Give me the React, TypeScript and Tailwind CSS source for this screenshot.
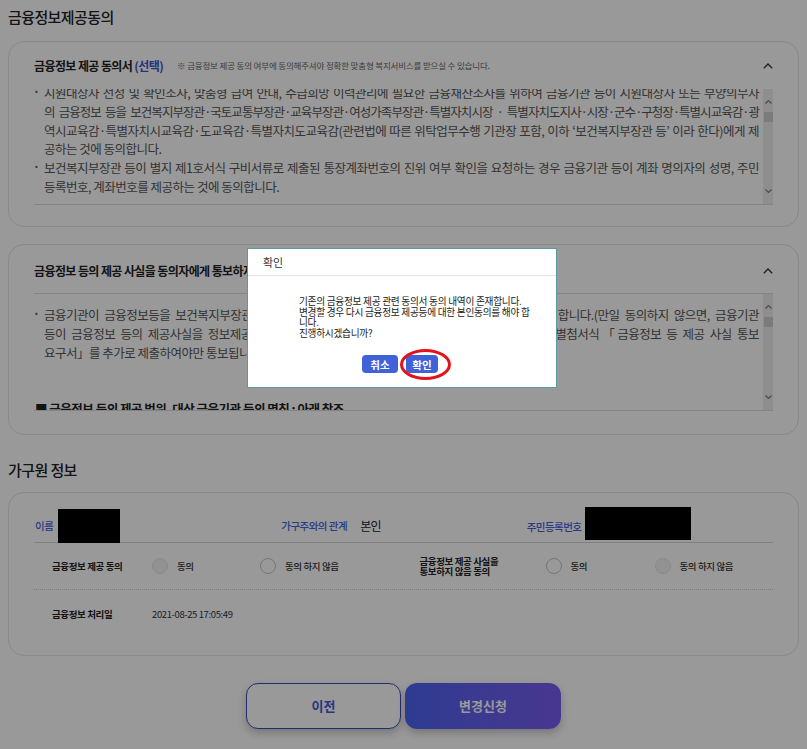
import React from 'react';

const FONT = "font-['Noto_Sans_CJK_KR','Noto_Sans',sans-serif]";

function ChevronUp() {
  return (
    <svg width="10" height="6" viewBox="0 0 10 6" className="shrink-0">
      <polyline points="0.8,5.3 5,1 9.2,5.3" fill="none" stroke="#333" strokeWidth="1.3" />
    </svg>
  );
}

function ScrollRail() {
  return (
    <div className="w-[10px] shrink-0 bg-[#ededed] flex flex-col">
      <div className="h-[15px] flex items-end justify-center">
        <svg width="7" height="4" viewBox="0 0 7 4">
          <polyline points="0.5,3.5 3.5,0.6 6.5,3.5" fill="none" stroke="#777" strokeWidth="1.1" />
        </svg>
      </div>
      <div className="mt-[8px] mx-auto h-[10px] w-[9px] bg-[#cdcdcd]" />
      <div className="flex-1" />
      <div className="h-[15px] flex items-start justify-center">
        <svg width="7" height="4" viewBox="0 0 7 4">
          <polyline points="0.5,0.5 3.5,3.4 6.5,0.5" fill="none" stroke="#777" strokeWidth="1.1" />
        </svg>
      </div>
    </div>
  );
}

// lines: every line but the last is stretched to the full width
function Bullet({ lines, tight }: { lines: string[]; tight?: number }) {
  return (
    <div className="flex">
      <span className="w-[9px] shrink-0 text-[8px] leading-[14px] text-[#555]">•</span>
      <div className="flex-1 min-w-0">
        {lines.map((l, i) => {
          let cls = i < lines.length - 1 ? 'block whitespace-nowrap [text-align-last:justify] text-justify' : 'block whitespace-nowrap';
          if (i === tight) cls += ' tracking-[-0.075em]';
          return (
            <span key={i} className={cls}>
              {l}
            </span>
          );
        })}
      </div>
    </div>
  );
}

function Radio({ disabled, label }: { disabled?: boolean; label: string }) {
  return (
    <div className="flex items-center">
      <span
        className={
          disabled
            ? 'w-[16px] h-[16px] rounded-full border border-[#e6e6e6] bg-[#f4f4f4]'
            : 'w-[16px] h-[16px] rounded-full border border-[#c4c4c4] bg-white'
        }
      />
      <span className="ml-[9px] text-[9.5px] tracking-[-0.04em] font-medium text-[#333]">{label}</span>
    </div>
  );
}

export default function App() {
  return (
    <div className={`${FONT} relative min-h-screen bg-white px-[8px] pb-[20px] text-[#333]`}>
      <h2 className="pt-[6px] pb-[14px] text-[15px] leading-[21px] tracking-[-0.04em] font-medium text-[#222]">금융정보제공동의</h2>

      {/* 금융정보 제공 동의서 */}
      <div className="rounded-2xl border border-[#e4e4e4] px-[25px] pb-[21px]">
        <div className="h-[47px] flex items-center justify-between">
          <div className="flex items-center">
            <span className="text-[12px] font-bold tracking-[-0.05em] text-[#222]">
              금융정보 제공 동의서 <span className="text-[#3d55d0]">(선택)</span>
            </span>
            <span className="ml-[14px] text-[8.5px] tracking-[-0.02em] text-[#666]">
              ※ 금융정보 제공 동의 여부에 동의해주셔야 정확한 맞춤형 복지서비스를 받으실 수 있습니다.
            </span>
          </div>
          <ChevronUp />
        </div>
        <div className="h-[116px] flex border-b border-[#dcdcdc] overflow-hidden">
          <div className="flex-1 min-w-0 overflow-hidden pr-[4px] pl-[1px]">
            <div className="-mt-[5px] text-[12.5px] leading-[18.8px] tracking-[-0.04em] text-[#555]">
              <Bullet
                tight={1}
                lines={[
                  '지원대상자 선정 및 확인조사, 맞춤형 급여 안내, 수급희망 이력관리에 필요한 금융재산조사를 위하여 금융기관 등이 지원대상자 또는 부양의무자',
                  '의 금융정보 등을 보건복지부장관·국토교통부장관·교육부장관·여성가족부장관·특별자치시장 · 특별자치도지사·시장·군수·구청장·특별시교육감·광',
                  '역시교육감·특별자치시교육감·도교육감·특별자치도교육감(관련법에 따른 위탁업무수행 기관장 포함, 이하 ‘보건복지부장관 등’ 이라 한다)에게 제',
                  '공하는 것에 동의합니다.',
                ]}
              />
              <Bullet
                lines={[
                  '보건복지부장관 등이 별지 제1호서식 구비서류로 제출된 통장계좌번호의 진위 여부 확인을 요청하는 경우 금융기관 등이 계좌 명의자의 성명, 주민',
                  '등록번호, 계좌번호를 제공하는 것에 동의합니다.',
                ]}
              />
            </div>
          </div>
          <ScrollRail />
        </div>
      </div>

      {/* 제공 사실 통보 */}
      <div className="mt-[17px] rounded-2xl border border-[#e4e4e4] px-[25px] pb-[23px]">
        <div className="h-[49px] pt-[4px] flex items-center justify-between border-b border-[#dcdcdc]">
          <span className="text-[12px] font-bold tracking-[-0.05em] text-[#222]">
            금융정보 등의 제공 사실을 동의자에게 통보하지 않음 동의 <span className="text-[#3d55d0]">(선택)</span>
          </span>
          <ChevronUp />
        </div>
        <div className="h-[117px] flex border-b border-[#dcdcdc] overflow-hidden">
          <div className="flex-1 min-w-0 overflow-hidden pr-[4px] pl-[1px]">
            <div className="pt-[12px] text-[12.5px] leading-[18.8px] tracking-[-0.04em] text-[#555]">
              <Bullet
                lines={[
                  '금융기관이 금융정보등을 보건복지부장관 등에게 제공한 사실을 동의자에게 통보하지 않는 것에 동의합니다.(만일 동의하지 않으면, 금융기관',
                  '등이 금융정보 등의 제공사실을 정보제공 동의자에게 통보하지 않으므로, 통보를 원하시는 경우에는 별첨서식「금융정보 등 제공 사실 통보',
                  '요구서」를 추가로 제출하여야만 통보됩니다.)',
                ]}
              />
              <p className="mt-[38px] font-bold text-[#222]">■ 금융정보 등의 제공 범위, 대상 금융기관 등의 명칭 : 아래 참조</p>
            </div>
          </div>
          <ScrollRail />
        </div>
      </div>

      <h2 className="pt-[24px] pb-[12px] text-[15px] leading-[21px] tracking-[-0.04em] font-medium text-[#222]">가구원 정보</h2>

      {/* 가구원 정보 */}
      <div className="rounded-2xl border border-[#e4e4e4] px-[25px] pt-[16px] pb-[17px]">
        <div className="h-[34px] grid grid-cols-3 border-b border-[#d6d6d6]">
          <div className="flex items-center pl-[1px]">
            <span className="text-[10.5px] font-medium tracking-[-0.05em] text-[#4462e0]">이름</span>
            <span className="ml-[5px] w-[62px] h-[34px] bg-black" />
          </div>
          <div className="flex items-center pl-[1px]">
            <span className="text-[10.5px] font-medium tracking-[-0.05em] text-[#4462e0]">가구주와의 관계</span>
            <span className="ml-[13px] text-[12px] tracking-[-0.05em] text-[#222]">본인</span>
          </div>
          <div className="flex items-start">
            <span className="mt-[10px] text-[10.5px] font-medium tracking-[-0.05em] text-[#4462e0]">주민등록번호</span>
            <span className="ml-[4px] -mt-[2px] w-[106px] h-[33px] bg-black" />
          </div>
        </div>

        <div className="h-[47px] grid grid-cols-2 border-b border-dotted border-[#cfcfcf]">
          <div className="flex items-center pl-[18px]">
            <span className="w-[100px] text-[9.5px] font-semibold tracking-[-0.04em] text-[#222]">금융정보 제공 동의</span>
            <div className="w-[108px]">
              <Radio disabled label="동의" />
            </div>
            <Radio label="동의 하지 않음" />
          </div>
          <div className="flex items-center pl-[16px]">
            <span className="w-[126px] text-[9.5px] leading-[10.5px] font-semibold tracking-[-0.04em] text-[#222]">
              금융정보 제공 사실을
              <br />
              통보하지 않음 동의
            </span>
            <div className="w-[109px]">
              <Radio label="동의" />
            </div>
            <Radio disabled label="동의 하지 않음" />
          </div>
        </div>

        <div className="h-[48px] flex items-center pl-[18px]">
          <span className="w-[100px] text-[9.5px] font-semibold tracking-[-0.04em] text-[#222]">금융정보 처리일</span>
          <span className="text-[9.5px] tracking-[-0.04em] text-[#333]">2021-08-25 17:05:49</span>
        </div>
      </div>

      <div className="mt-[27px] flex justify-center gap-[4px]">
        <button className="w-[155px] h-[46px] rounded-xl border border-[#3a4dbb] bg-white text-[13px] font-bold text-[#4359d6] shadow-[0_4px_8px_rgba(0,0,0,0.22)]">
          이전
        </button>
        <button className="w-[156px] h-[46px] rounded-xl bg-gradient-to-r from-[#4a64f2] to-[#7a5cf0] text-[13px] font-bold text-white shadow-[0_4px_8px_rgba(0,0,0,0.22)]">
          변경신청
        </button>
      </div>

      {/* dim overlay */}
      <div className="fixed inset-0 bg-black/40" />

      {/* confirm dialog */}
      <div className="fixed left-[247px] top-[248px] w-[310px] bg-white border border-[#5d9aa0]">
        <div className="h-[27px] flex items-center pl-[15px] border-b border-[#e2e2e2] text-[11px] text-[#333]">확인</div>
        <div className="pt-[20px] pl-[51px] text-[9.7px] leading-[10.6px] tracking-[-0.03em] text-[#222]">
          기존의 금융정보 제공 관련 동의서 동의 내역이 존재합니다.
          <br />
          변경할 경우 다시 금융정보 제공등에 대한 본인동의를 해야 합
          <br />
          니다.
          <br />
          진행하시겠습니까?
        </div>
        <div className="mt-[17px] pb-[14px] flex items-center justify-center gap-[8px] pr-[4px]">
          <button className="h-[18px] w-[36px] rounded-[4px] bg-[#3f62d9] text-[10.5px] font-bold text-white">취소</button>
          <div className="relative flex">
            <button className="h-[18px] w-[32px] rounded-[4px] bg-[#3f62d9] text-[10.5px] font-bold text-white">확인</button>
            <span className="absolute -left-[6px] -right-[13px] -top-[6px] -bottom-[7px] rounded-[50%] border-[3px] border-[#e3121c]" />
          </div>
        </div>
      </div>
    </div>
  );
}
